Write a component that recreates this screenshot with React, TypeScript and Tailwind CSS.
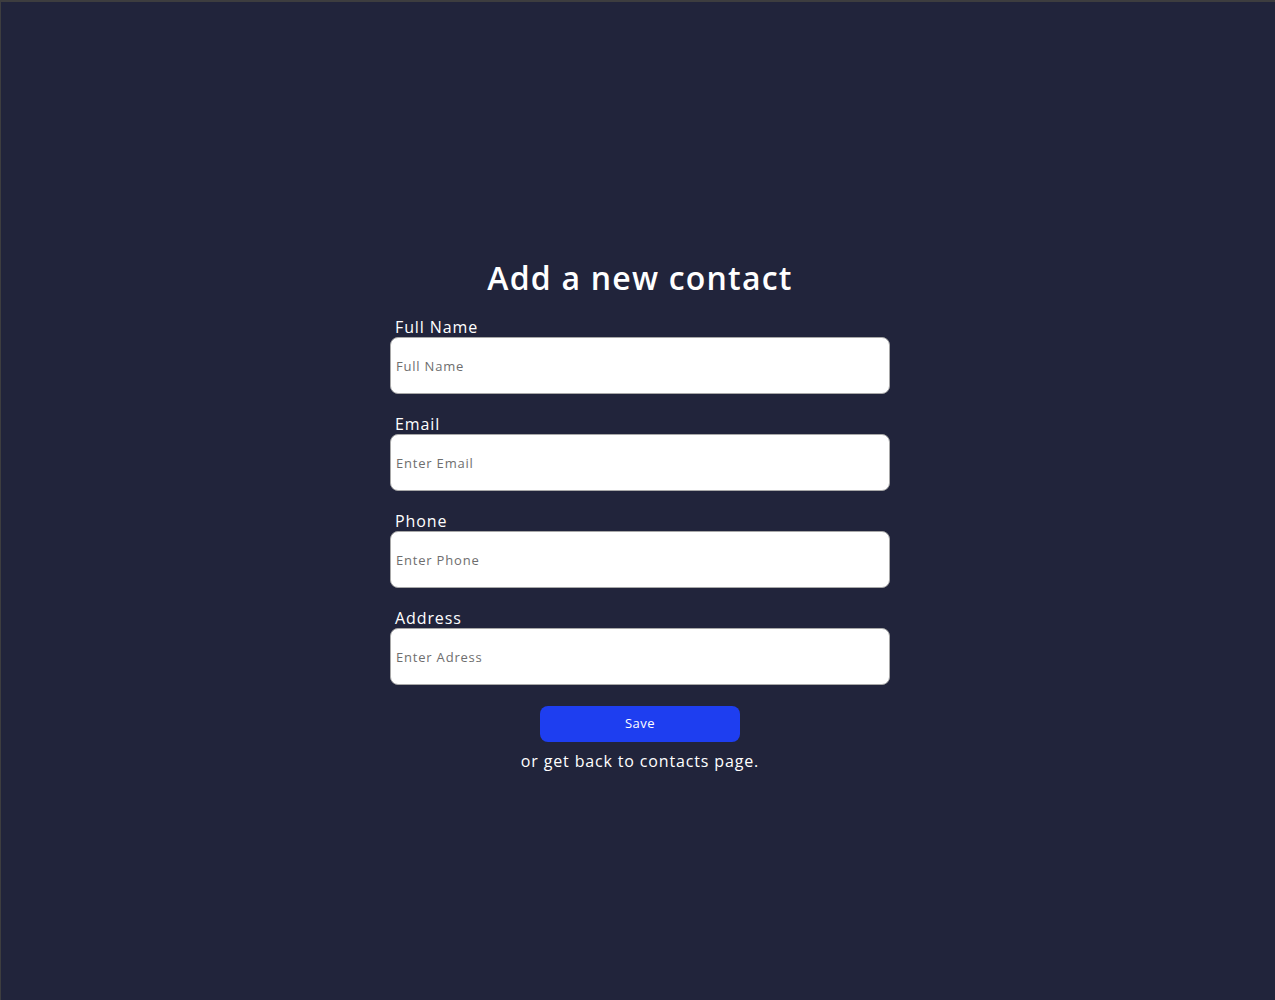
import React from "react";

const fields = [
  { label: "Full Name", placeholder: "Full Name" },
  { label: "Email", placeholder: "Enter Email" },
  { label: "Phone", placeholder: "Enter Phone" },
  { label: "Address", placeholder: "Enter Adress" },
];

export default function App() {
  return (
    <div
      className="w-[1275px] h-[1000px] bg-[#21243b] border-t-2 border-l border-[#3d3d3f] flex flex-col items-center pt-[256px] pl-[4px] text-white"
      style={{ fontFamily: '"Open Sans", "Liberation Sans", sans-serif' }}
    >
      <h1 className="text-[32px] leading-[40px] font-semibold tracking-[1.2px]">Add a new contact</h1>
      <form className="w-[500px] flex flex-col mt-[19px]">
        {fields.map((f) => (
          <div key={f.label} className="flex flex-col mb-[20px]">
            <label className="text-[16px] leading-[20px] pl-[5px] tracking-[0.9px]">{f.label}</label>
            <input
              type="text"
              placeholder={f.placeholder}
              className="h-[57px] w-full bg-white rounded-[8px] border border-[#a8a8a8] px-[5px] text-[13px] tracking-[0.8px] text-black placeholder:text-[#6e6e6e] outline-none"
            />
          </div>
        ))}
        <div className="flex justify-center mt-px">
          <button
            type="button"
            className="w-[200px] h-[36px] rounded-[8px] bg-[#1e3ef0] text-white text-[13px] tracking-[0.5px]"
          >
            Save
          </button>
        </div>
        <p className="text-center text-[16px] leading-[20px] mt-[9px] tracking-[0.85px]">or get back to contacts page.</p>
      </form>
    </div>
  );
}
